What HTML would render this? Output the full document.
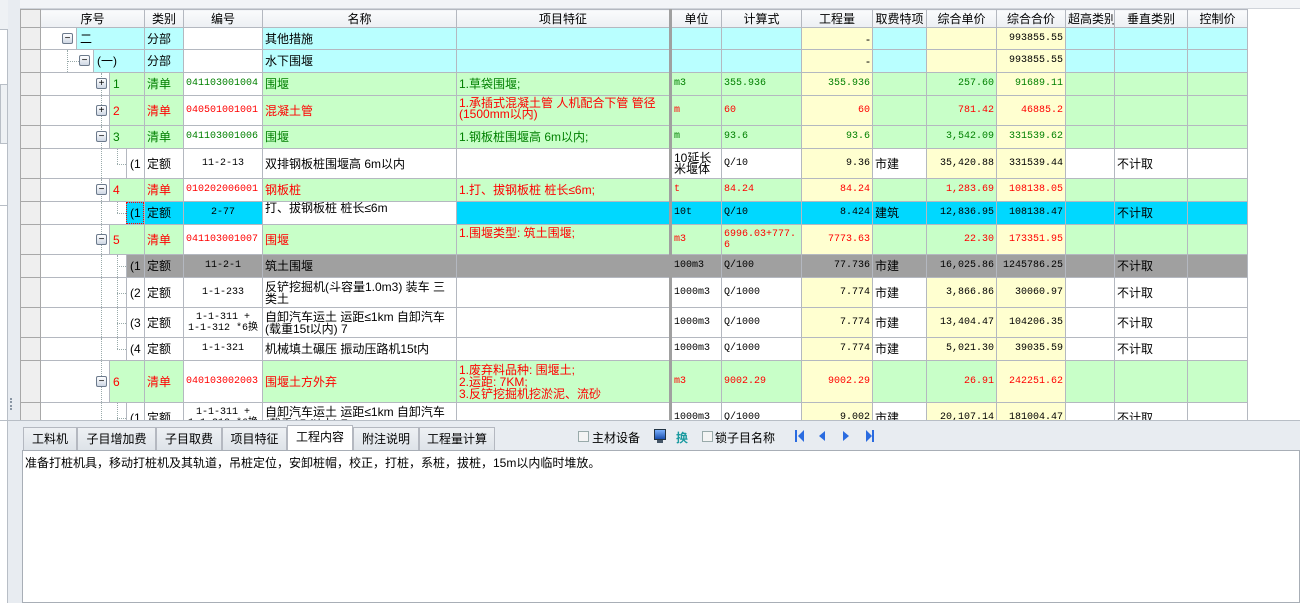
<!DOCTYPE html>
<html><head><meta charset="utf-8">
<style>
*{box-sizing:border-box;margin:0;padding:0}
body{width:1300px;height:603px;overflow:hidden;background:#e8ecf1;font-family:"Liberation Sans","Noto Sans CJK SC",sans-serif;font-size:12px;color:#000;position:relative}
.lp{position:absolute;left:0;top:0;width:8px;height:603px;background:#fff;border-right:1px solid #b8bec6}
.lp2{position:absolute;left:0;top:0;width:8px;height:30px;background:#eef1f4;border-bottom:1px solid #b8bec6}
.top{position:absolute;left:20px;top:0;width:1280px;height:9px;background:#f2f4f7;border-bottom:1px solid #d0d4da}
.grid{position:absolute;left:20px;top:9px;width:1280px;height:411px;overflow:hidden;background:#fff}
table{border-collapse:collapse;table-layout:fixed;width:1227px}
td,th{border:1px solid #b4b8c0;overflow:hidden;white-space:nowrap;padding:0 2px;vertical-align:middle;line-height:12px}
th{font-weight:normal;height:18px;background:linear-gradient(#fafbfc,#eceff3);text-align:center;font-size:12px}
td.rh,th.rh{background:#efefef;border-color:#a8a8a8}
.n{font-family:"Liberation Mono",monospace;font-size:10px}
.r{text-align:right}.ce{text-align:center}
.tk{border-right:3px solid #a0a0a0}
tr.c td{background:#b9ffff}tr.g td{background:#c8ffc8}tr.w td{background:#fff}tr.s td{background:#00d8ff}tr.k td{background:#a0a0a0}
tr td.y{background:#ffffd0}tr td.wh{background:#fff}
tr.k td.y{background:#a0a0a0}
tr td.rh{background:#efefef}
tr.G td{color:#008000}tr.R td{color:#ff0000}
tr td.sq{position:relative;background:#fff;padding:0}
.bg{position:absolute;top:0;bottom:0;right:0;padding-left:3px;display:flex;align-items:center;border-left:1px solid #b4b8c0}
tr.c .bg{background:#b9ffff}tr.g .bg{background:#c8ffc8}tr.w .bg{background:#fff}tr.s .bg{background:#00d8ff}tr.k .bg{background:#a0a0a0}
.bx{position:absolute;top:50%;margin-top:-6px;width:11px;height:11px;border:1px solid #6c7a8c;border-radius:2px;background:linear-gradient(#fff,#cfd8e4);font-size:10px;line-height:9px;text-align:center;color:#000;font-style:normal}
.vl{position:absolute;top:0;bottom:0;border-left:1px dotted #9aa}
.hl{position:absolute;top:50%;border-top:1px dotted #9aa}
tr.s td{border-top:1px dotted #f00;border-bottom:1px dotted #f00}
.tab{position:absolute;top:427px;height:24px;border:1px solid #b4b8c0;border-bottom:none;background:linear-gradient(#eef1f4,#dde2e8);text-align:center;line-height:22px;font-size:12px}
.tab.a{background:#fff;top:425px;height:26px}
.txt{position:absolute;left:22px;top:450px;width:1278px;height:153px;background:#fff;border:1px solid #a8aeb6;padding:3px 0 0 2px;font-size:12px}
.cb{position:absolute;top:431px;width:11px;height:11px;border:1px solid #9aa;background:#f4f4f4}
.tl2{position:absolute;top:429px;font-size:12px}
</style></head><body>
<div class="lp"></div><div class="lp2"></div>
<div style="position:absolute;left:0;top:84px;width:8px;height:60px;background:#eef1f4;border:1px solid #b8bec6"></div>
<div style="position:absolute;left:0;top:205px;width:8px;height:1px;background:#b8bec6"></div>
<div class="top"></div>
<div class="grid">
<table>
<colgroup><col style="width:20px"><col style="width:104px"><col style="width:39px"><col style="width:79px"><col style="width:194px"><col style="width:214px"><col style="width:51px"><col style="width:80px"><col style="width:71px"><col style="width:54px"><col style="width:70px"><col style="width:69px"><col style="width:49px"><col style="width:73px"><col style="width:60px"></colgroup>
<tr><th class="rh"></th><th>序号</th><th>类别</th><th>编号</th><th>名称</th><th class="tk">项目特征</th><th>单位</th><th>计算式</th><th>工程量</th><th>取费特项</th><th>综合单价</th><th>综合合价</th><th>超高类别</th><th>垂直类别</th><th>控制价</th></tr>

<tr class="c" style="height:22px"><td class="rh"></td><td class="sq"><i class="bx" style="left:21px">−</i><div class="bg" style="left:35px">二</div></td><td>分部</td><td class="wh"></td><td>其他措施</td><td class="tk"></td><td></td><td></td><td class="y r">-</td><td></td><td class="y"></td><td class="y r n">993855.55</td><td></td><td></td><td></td></tr>

<tr class="c" style="height:23px"><td class="rh"></td><td class="sq"><div class="vl" style="left:26px"></div><div class="hl" style="left:27px;width:11px"></div><i class="bx" style="left:38px">−</i><div class="bg" style="left:52px">(一)</div></td><td>分部</td><td class="wh"></td><td>水下围堰</td><td class="tk"></td><td></td><td></td><td class="y r">-</td><td></td><td class="y"></td><td class="y r n">993855.55</td><td></td><td></td><td></td></tr>

<tr class="g G" style="height:23px"><td class="rh"></td><td class="sq"><div class="vl" style="left:60px"></div><i class="bx" style="left:55px">+</i><div class="bg" style="left:68px">1</div></td><td>清单</td><td class="wh n">041103001004</td><td>围堰</td><td class="tk">1.草袋围堰;</td><td class="n">m3</td><td class="n">355.936</td><td class="y r n">355.936</td><td></td><td class="r n">257.60</td><td class="y r n">91689.11</td><td></td><td></td><td></td></tr>

<tr class="g R" style="height:30px"><td class="rh"></td><td class="sq"><div class="vl" style="left:60px"></div><i class="bx" style="left:55px">+</i><div class="bg" style="left:68px">2</div></td><td>清单</td><td class="wh n">040501001001</td><td>混凝土管</td><td class="tk" style="white-space:normal;line-height:11px;vertical-align:top;padding-top:2px">1.承插式混凝土管 人机配合下管 管径(1500mm以内)</td><td class="n">m</td><td class="n">60</td><td class="y r n">60</td><td></td><td class="r n">781.42</td><td class="y r n">46885.2</td><td></td><td></td><td></td></tr>

<tr class="g G" style="height:23px"><td class="rh"></td><td class="sq"><div class="vl" style="left:60px"></div><i class="bx" style="left:55px">−</i><div class="bg" style="left:68px">3</div></td><td>清单</td><td class="wh n">041103001006</td><td>围堰</td><td class="tk">1.钢板桩围堰高 6m以内;</td><td class="n">m</td><td class="n">93.6</td><td class="y r n">93.6</td><td></td><td class="r n">3,542.09</td><td class="y r n">331539.62</td><td></td><td></td><td></td></tr>

<tr class="w" style="height:30px"><td class="rh"></td><td class="sq"><div class="vl" style="left:60px"></div><div class="vl" style="left:76px;bottom:50%"></div><div class="hl" style="left:76px;width:9px"></div><div class="bg" style="left:85px">(1</div></td><td>定额</td><td class="ce n">11-2-13</td><td>双排钢板桩围堰高 6m以内</td><td class="tk"></td><td style="white-space:normal;line-height:11px">10延长米堰体</td><td class="n">Q/10</td><td class="y r n">9.36</td><td>市建</td><td class="y r n">35,420.88</td><td class="y r n">331539.44</td><td></td><td>不计取</td><td></td></tr>

<tr class="g R" style="height:23px"><td class="rh"></td><td class="sq"><div class="vl" style="left:60px"></div><i class="bx" style="left:55px">−</i><div class="bg" style="left:68px">4</div></td><td>清单</td><td class="wh n">010202006001</td><td>钢板桩</td><td class="tk">1.打、拔钢板桩 桩长≤6m;</td><td class="n">t</td><td class="n">84.24</td><td class="y r n">84.24</td><td></td><td class="r n">1,283.69</td><td class="y r n">108138.05</td><td></td><td></td><td></td></tr>

<tr class="s" style="height:23px"><td class="rh"></td><td class="sq"><div class="vl" style="left:60px"></div><div class="vl" style="left:76px;bottom:50%"></div><div class="hl" style="left:76px;width:9px"></div><div class="bg" style="left:85px;border:1px dotted #f00">(1</div></td><td>定额</td><td class="ce n">2-77</td><td class="wh" style="vertical-align:top">打、拔钢板桩 桩长≤6m</td><td class="tk"></td><td class="n">10t</td><td class="n">Q/10</td><td class="r n">8.424</td><td>建筑</td><td class="r n">12,836.95</td><td class="r n">108138.47</td><td></td><td>不计取</td><td></td></tr>

<tr class="g R" style="height:30px"><td class="rh"></td><td class="sq"><div class="vl" style="left:60px"></div><i class="bx" style="left:55px">−</i><div class="bg" style="left:68px">5</div></td><td>清单</td><td class="wh n">041103001007</td><td>围堰</td><td class="tk" style="vertical-align:top;padding-top:2px">1.围堰类型: 筑土围堰;</td><td class="n">m3</td><td class="n" style="white-space:normal;word-break:break-all;line-height:11px">6996.03+777.6</td><td class="y r n">7773.63</td><td></td><td class="r n">22.30</td><td class="y r n">173351.95</td><td></td><td></td><td></td></tr>

<tr class="k" style="height:23px"><td class="rh"></td><td class="sq"><div class="vl" style="left:60px"></div><div class="vl" style="left:76px"></div><div class="hl" style="left:76px;width:9px"></div><div class="bg" style="left:85px">(1</div></td><td>定额</td><td class="ce n">11-2-1</td><td>筑土围堰</td><td class="tk"></td><td class="n">100m3</td><td class="n">Q/100</td><td class="r n">77.736</td><td>市建</td><td class="r n">16,025.86</td><td class="r n">1245786.25</td><td></td><td>不计取</td><td></td></tr>

<tr class="w" style="height:30px"><td class="rh"></td><td class="sq"><div class="vl" style="left:60px"></div><div class="vl" style="left:76px"></div><div class="hl" style="left:76px;width:9px"></div><div class="bg" style="left:85px">(2</div></td><td>定额</td><td class="ce n">1-1-233</td><td style="white-space:normal;line-height:12px">反铲挖掘机(斗容量1.0m3) 装车 三类土</td><td class="tk"></td><td class="n">1000m3</td><td class="n">Q/1000</td><td class="y r n">7.774</td><td>市建</td><td class="y r n">3,866.86</td><td class="y r n">30060.97</td><td></td><td>不计取</td><td></td></tr>

<tr class="w" style="height:30px"><td class="rh"></td><td class="sq"><div class="vl" style="left:60px"></div><div class="vl" style="left:76px"></div><div class="hl" style="left:76px;width:9px"></div><div class="bg" style="left:85px">(3</div></td><td>定额</td><td class="ce n" style="line-height:11px">1-1-311 +<br>1-1-312 *6换</td><td style="white-space:normal;line-height:12px">自卸汽车运土 运距≤1km 自卸汽车(载重15t以内) 7</td><td class="tk"></td><td class="n">1000m3</td><td class="n">Q/1000</td><td class="y r n">7.774</td><td>市建</td><td class="y r n">13,404.47</td><td class="y r n">104206.35</td><td></td><td>不计取</td><td></td></tr>

<tr class="w" style="height:23px"><td class="rh"></td><td class="sq"><div class="vl" style="left:60px"></div><div class="vl" style="left:76px;bottom:50%"></div><div class="hl" style="left:76px;width:9px"></div><div class="bg" style="left:85px">(4</div></td><td>定额</td><td class="ce n">1-1-321</td><td>机械填土碾压 振动压路机15t内</td><td class="tk"></td><td class="n">1000m3</td><td class="n">Q/1000</td><td class="y r n">7.774</td><td>市建</td><td class="y r n">5,021.30</td><td class="y r n">39035.59</td><td></td><td>不计取</td><td></td></tr>

<tr class="g R" style="height:42px"><td class="rh"></td><td class="sq"><div class="vl" style="left:60px"></div><i class="bx" style="left:55px">−</i><div class="bg" style="left:68px">6</div></td><td>清单</td><td class="wh n">040103002003</td><td>围堰土方外弃</td><td class="tk" style="white-space:normal;line-height:12px">1.废弃料品种: 围堰土;<br>2.运距: 7KM;<br>3.反铲挖掘机挖淤泥、流砂</td><td class="n">m3</td><td class="n">9002.29</td><td class="y r n">9002.29</td><td></td><td class="r n">26.91</td><td class="y r n">242251.62</td><td></td><td></td><td></td></tr>

<tr class="w" style="height:30px"><td class="rh"></td><td class="sq"><div class="vl" style="left:60px"></div><div class="vl" style="left:76px"></div><div class="hl" style="left:76px;width:9px"></div><div class="bg" style="left:85px">(1</div></td><td>定额</td><td class="ce n" style="line-height:11px">1-1-311 +<br>1-1-312 *6换</td><td style="white-space:normal;line-height:12px">自卸汽车运土 运距≤1km 自卸汽车(载重15t以内) 7</td><td class="tk"></td><td class="n">1000m3</td><td class="n">Q/1000</td><td class="y r n">9.002</td><td>市建</td><td class="y r n">20,107.14</td><td class="y r n">181004.47</td><td></td><td>不计取</td><td></td></tr>
</table>
</div>
<div style="position:absolute;left:0;top:420px;width:1300px;height:1px;background:#b8bec6"></div>
<div style="position:absolute;left:10px;top:398px;width:2px;height:12px;border-left:2px dotted #8a96a4"></div>
<div class="tab" style="left:23px;width:54px">工料机</div>
<div class="tab" style="left:77px;width:79px">子目增加费</div>
<div class="tab" style="left:156px;width:66px">子目取费</div>
<div class="tab" style="left:222px;width:65px">项目特征</div>
<div class="tab a" style="left:287px;width:66px">工程内容</div>
<div class="tab" style="left:353px;width:66px">附注说明</div>
<div class="tab" style="left:419px;width:76px">工程量计算</div>
<div class="cb" style="left:578px"></div><div class="tl2" style="left:592px">主材设备</div>
<div style="position:absolute;left:654px;top:429px;width:12px;height:11px;background:linear-gradient(#7ab0ff,#1a4fb0);border:1px solid #234"></div><div style="position:absolute;left:657px;top:440px;width:6px;height:3px;background:#456"></div>
<div class="tl2" style="left:676px;color:#1a9aa0;font-weight:bold">换</div>
<div class="cb" style="left:702px"></div><div class="tl2" style="left:715px">锁子目名称</div>
<svg style="position:absolute;left:790px;top:429px" width="90" height="14"><g fill="#2a6be0"><rect x="5" y="1" width="2" height="12"/><path d="M14 1 L8 7 L14 13Z"/><path d="M35 2 L29 7 L35 12Z"/><path d="M53 2 L59 7 L53 12Z"/><path d="M76 1 L82 7 L76 13Z"/><rect x="82" y="1" width="2" height="12"/></g></svg>
<div class="txt">准备打桩机具，移动打桩机及其轨道，吊桩定位，安卸桩帽，校正，打桩，系桩，拔桩，15m以内临时堆放。</div>
</body></html>
